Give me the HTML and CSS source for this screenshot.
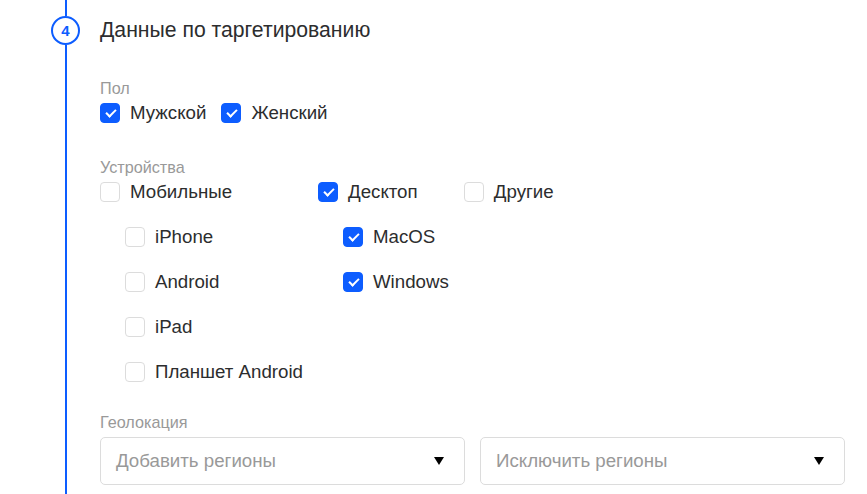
FILE: index.html
```html
<!DOCTYPE html>
<html lang="ru">
<head>
<meta charset="utf-8">
<link rel="stylesheet" href="styles.css">
</head>
<body>
<div class="step">
  <div class="rail">
    <div class="rail-line rail-top"></div>
    <div class="step-num">4</div>
    <div class="rail-line rail-rest"></div>
  </div>
  <div class="content">
    <h2 class="title">Данные по таргетированию</h2>

    <div class="field field-gender">
      <div class="label">Пол</div>
      <div class="row">
        <label class="cb checked"><span class="box"></span>Мужской</label>
        <label class="cb checked"><span class="box"></span>Женский</label>
      </div>
    </div>

    <div class="field field-devices">
      <div class="label">Устройства</div>
      <div class="cols">
        <div class="col">
          <label class="cb"><span class="box"></span>Мобильные</label>
          <div class="sub">
            <label class="cb"><span class="box"></span>iPhone</label>
            <label class="cb"><span class="box"></span>Android</label>
            <label class="cb"><span class="box"></span>iPad</label>
            <label class="cb"><span class="box"></span>Планшет Android</label>
          </div>
        </div>
        <div class="col">
          <label class="cb checked"><span class="box"></span>Десктоп</label>
          <div class="sub">
            <label class="cb checked"><span class="box"></span>MacOS</label>
            <label class="cb checked"><span class="box"></span>Windows</label>
          </div>
        </div>
        <div class="col">
          <label class="cb"><span class="box"></span>Другие</label>
        </div>
      </div>
    </div>

    <div class="field field-geo">
      <div class="label">Геолокация</div>
      <div class="selects">
        <div class="select"><span>Добавить регионы</span><span class="arrow"></span></div>
        <div class="select"><span>Исключить регионы</span><span class="arrow"></span></div>
      </div>
    </div>
  </div>
</div>
</body>
</html>
```
FILE: styles.css
```css
* { box-sizing: border-box; }
html, body { margin: 0; padding: 0; background: #fff; }
body {
  font-family: "Liberation Sans", Arial, sans-serif;
  color: #222;
  width: 867px;
  height: 494px;
  overflow: hidden;
}
.step {
  display: flex;
  min-height: 494px;
}
.rail {
  width: 29px;
  margin-left: 51px;
  display: flex;
  flex-direction: column;
  align-items: center;
}
.rail-line {
  width: 2px;
  background: #0d5dff;
}
.rail-top { height: 16px; }
.rail-rest { flex: 1; }
.step-num {
  width: 29px;
  height: 29px;
  border: 2px solid #0d5dff;
  border-radius: 50%;
  display: flex;
  align-items: center;
  justify-content: center;
  color: #0d5dff;
  font-weight: bold;
  font-size: 15px;
  line-height: 1;
}
.content {
  margin-left: 20px;
  flex: 1;
}
.title {
  margin: 18px 0 0;
  font-size: 21.2px;
  font-weight: normal;
  line-height: 24px;
  color: #2c2d2e;
}
.label {
  font-size: 16.2px;
  line-height: 18px;
  color: #999;
}
.field-gender { margin-top: 37px; }
.field-devices { margin-top: 33px; }
.field-geo { margin-top: 29px; }
.row {
  display: flex;
  gap: 15px;
  margin-top: 4px;
}
.cb {
  display: flex;
  align-items: center;
  gap: 10px;
  height: 24px;
  font-size: 18.7px;
  color: #2c2d2e;
  white-space: nowrap;
}
.box {
  width: 20px;
  height: 20px;
  border: 1px solid #dcdcdc;
  border-radius: 4px;
  background: #fff;
  flex: none;
  position: relative;
}
.checked .box {
  background: #0d5dff;
  border-color: #0d5dff;
}
.checked .box::after {
  content: "";
  position: absolute;
  left: 5px;
  top: 5px;
  width: 8px;
  height: 4px;
  border-left: 2.5px solid #fff;
  border-bottom: 2.5px solid #fff;
  transform: rotate(-45deg);
}
.cols {
  display: flex;
  gap: 15px;
  margin-top: 4px;
}
.col {
  display: flex;
  flex-direction: column;
}
.sub {
  display: flex;
  flex-direction: column;
  gap: 21px;
  padding-left: 25px;
  margin-top: 21px;
}
.selects {
  display: flex;
  gap: 15px;
  margin-top: 6px;
}
.select {
  width: 365px;
  height: 48px;
  border: 1px solid #dcdcdc;
  border-radius: 5px;
  display: flex;
  align-items: center;
  justify-content: space-between;
  padding: 0 20px 0 15px;
  font-size: 18.7px;
  color: #999;
}
.arrow {
  width: 0;
  height: 0;
  border-left: 5.5px solid transparent;
  border-right: 5.5px solid transparent;
  border-top: 8px solid #000;
}
```
